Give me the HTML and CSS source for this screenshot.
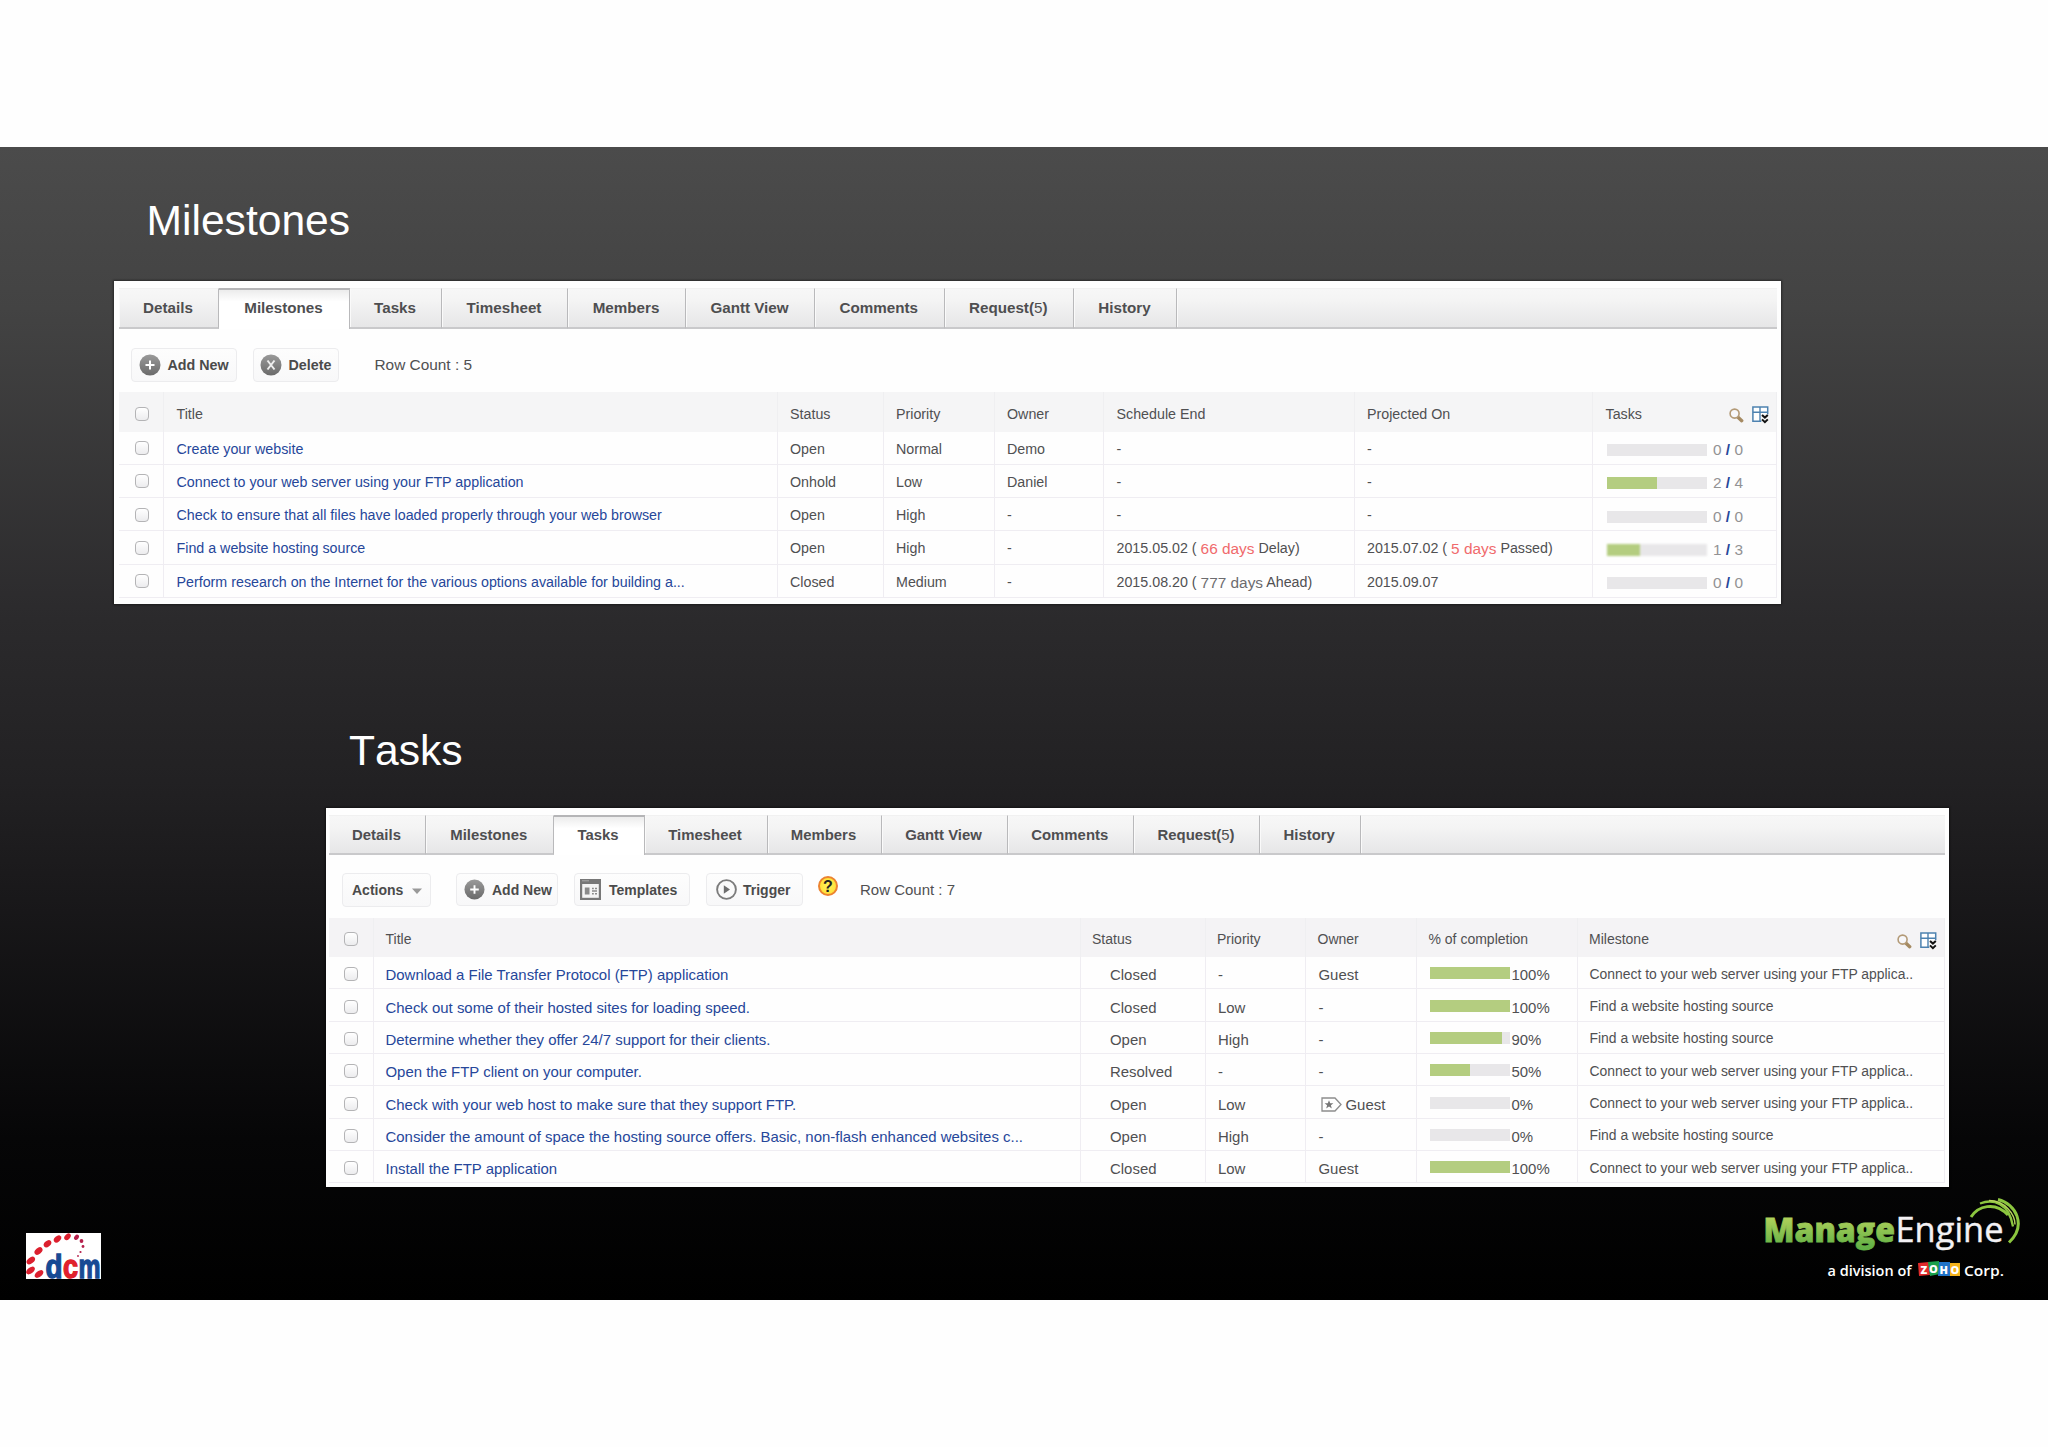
FILE: index.html
```html
<!DOCTYPE html>
<html lang="en">
<head>
<meta charset="utf-8">
<title>Milestones and Tasks</title>
<link rel="stylesheet" href="styles.css">
</head>
<body>
<svg class="defs" width="0" height="0" aria-hidden="true">
  <defs>
    <linearGradient id="disc" x1="0" y1="0" x2="0" y2="1"><stop offset="0" stop-color="#9a9a9a"/><stop offset="1" stop-color="#6a6a6a"/></linearGradient>
    <symbol id="i-add" viewBox="0 0 22 22"><circle cx="11" cy="11" r="10.5" fill="url(#disc)"/><path d="M11 6.5v9M6.5 11h9" stroke="#fff" stroke-width="2"/></symbol>
    <symbol id="i-del" viewBox="0 0 22 22"><circle cx="11" cy="11" r="10.5" fill="url(#disc)"/><path d="M7.5 6.5l7 9M14.5 6.5l-7 9" stroke="#eee" stroke-width="2"/></symbol>
    <symbol id="i-tpl" viewBox="0 0 21 21"><path d="M0 0h21v21H0z" fill="#777"/><path d="M2.2 5h16.6v13.8H2.2z" fill="#f4f4f4"/><path d="M2 1.8h7" stroke="#aaa"/><path d="M4.800 8.500h4.700v7H4.800z" fill="#8a8a8a"/><path d="M12 9.500h1.800M15 9.500h2M12 12h5M12 14.800h1.800M15 14.800h2" stroke="#8a8a8a" stroke-width="1.500"/></symbol>
    <symbol id="i-run" viewBox="0 0 21 21"><circle cx="10.500" cy="10.500" r="9.400" fill="#fafafa" stroke="#7c7c7c" stroke-width="1.900"/><path d="M7.800 6.200l6.200 4.300-6.200 4.300z" fill="#6e6e6e"/></symbol>
    <symbol id="i-find" viewBox="0 0 15 15"><path d="M9 9.200l3.700 3.500" stroke="#a58a62" stroke-width="3.400" stroke-linecap="round"/><circle cx="5.600" cy="5.600" r="4.500" fill="#f7f7fa" stroke="#b39a77" stroke-width="1.600"/></symbol>
    <symbol id="i-cols" viewBox="0 0 17 18"><path d="M.9 .9h14.800v14.400H.9z" fill="#fff" stroke="#4d82b0" stroke-width="1.500"/><path d="M.9 6.300h14.800M8 .9v14.400" stroke="#4d82b0" stroke-width="1.400" fill="none"/><path d="M9.300 8.300h7.700v9.700H9.300z" fill="#f5f5f5"/><path d="M10 9l2.900 2.600L15.800 9M10 13.400l2.900 2.800 2.900-2.800" fill="none" stroke="#111" stroke-width="2"/></symbol>
  </defs>
</svg>

<main class="slide">
  <h1 class="heading heading-milestones">Milestones</h1>

  <section class="panel milestones">
    <nav class="tabs">
      <a>Details</a><a class="active">Milestones</a><a>Tasks</a><a>Timesheet</a><a>Members</a><a>Gantt View</a><a>Comments</a><a>Request(<i>5</i>)</a><a>History</a><span></span>
    </nav>
    <div class="toolbar">
      <button class="btn"><svg class="disc"><use href="#i-add"/></svg>Add New</button>
      <button class="btn"><svg class="disc"><use href="#i-del"/></svg>Delete</button>
      <span class="count">Row Count : 5</span>
    </div>
    <div class="grid">
      <div class="row head"><span class="pick"><b class="box"></b></span><span>Title</span><span>Status</span><span>Priority</span><span>Owner</span><span>Schedule End</span><span>Projected On</span><span class="last">Tasks<span class="tools"><svg class="find"><use href="#i-find"/></svg><svg class="cols"><use href="#i-cols"/></svg></span></span></div>
      <div class="row"><span class="pick"><b class="box"></b></span><a>Create your website</a><span>Open</span><span>Normal</span><span>Demo</span><span>-</span><span>-</span><span class="progress"><span class="bar"></span><em>0 <b>/</b> 0</em></span></div>
      <div class="row"><span class="pick"><b class="box"></b></span><a>Connect to your web server using your FTP application</a><span>Onhold</span><span>Low</span><span>Daniel</span><span>-</span><span>-</span><span class="progress"><span class="bar"><i style="width:50%"></i></span><em>2 <b>/</b> 4</em></span></div>
      <div class="row"><span class="pick"><b class="box"></b></span><a>Check to ensure that all files have loaded properly through your web browser</a><span>Open</span><span>High</span><span>-</span><span>-</span><span>-</span><span class="progress"><span class="bar"></span><em>0 <b>/</b> 0</em></span></div>
      <div class="row"><span class="pick"><b class="box"></b></span><a>Find a website hosting source</a><span>Open</span><span>High</span><span>-</span><span>2015.05.02 ( <em class="late">66 days</em> Delay)</span><span>2015.07.02 ( <em class="late">5 days</em> Passed)</span><span class="progress"><span class="bar soft"><i style="width:33.3%"></i></span><em>1 <b>/</b> 3</em></span></div>
      <div class="row"><span class="pick"><b class="box"></b></span><a>Perform research on the Internet for the various options available for building a...</a><span>Closed</span><span>Medium</span><span>-</span><span>2015.08.20 ( <em class="early">777 days</em> Ahead)</span><span>2015.09.07</span><span class="progress"><span class="bar"></span><em>0 <b>/</b> 0</em></span></div>
    </div>
  </section>

  <h1 class="heading heading-tasks">Tasks</h1>

  <section class="panel tasks">
    <nav class="tabs">
      <a>Details</a><a>Milestones</a><a class="active">Tasks</a><a>Timesheet</a><a>Members</a><a>Gantt View</a><a>Comments</a><a>Request(<i>5</i>)</a><a>History</a><span></span>
    </nav>
    <div class="toolbar">
      <button class="btn actions">Actions<svg class="caret" viewBox="0 0 10 6"><path d="M0 .5h10L5 6z" fill="#999"/></svg></button>
      <button class="btn add"><svg class="disc"><use href="#i-add"/></svg>Add New</button>
      <button class="btn tpl"><svg class="disc"><use href="#i-tpl"/></svg>Templates</button>
      <button class="btn run"><svg class="disc"><use href="#i-run"/></svg>Trigger</button>
      <span class="help">?</span>
      <span class="count">Row Count : 7</span>
    </div>
    <div class="grid">
      <div class="row head"><span class="pick"><b class="box"></b></span><span>Title</span><span>Status</span><span>Priority</span><span>Owner</span><span>% of completion</span><span class="last">Milestone<span class="tools"><svg class="find"><use href="#i-find"/></svg><svg class="cols"><use href="#i-cols"/></svg></span></span></div>
      <div class="row"><span class="pick"><b class="box"></b></span><a>Download a File Transfer Protocol (FTP) application</a><span class="status">Closed</span><span>-</span><span>Guest</span><span class="progress"><span class="bar"><i style="width:100%"></i></span><em>100%</em></span><span class="ms">Connect to your web server using your FTP applica..</span></div>
      <div class="row"><span class="pick"><b class="box"></b></span><a>Check out some of their hosted sites for loading speed.</a><span class="status">Closed</span><span>Low</span><span>-</span><span class="progress"><span class="bar"><i style="width:100%"></i></span><em>100%</em></span><span class="ms">Find a website hosting source</span></div>
      <div class="row"><span class="pick"><b class="box"></b></span><a>Determine whether they offer 24/7 support for their clients.</a><span class="status">Open</span><span>High</span><span>-</span><span class="progress"><span class="bar"><i style="width:90%"></i></span><em>90%</em></span><span class="ms">Find a website hosting source</span></div>
      <div class="row"><span class="pick"><b class="box"></b></span><a>Open the FTP client on your computer.</a><span class="status">Resolved</span><span>-</span><span>-</span><span class="progress"><span class="bar"><i style="width:50%"></i></span><em>50%</em></span><span class="ms">Connect to your web server using your FTP applica..</span></div>
      <div class="row"><span class="pick"><b class="box"></b></span><a>Check with your web host to make sure that they support FTP.</a><span class="status">Open</span><span>Low</span><span class="owner"><svg class="tag" viewBox="0 0 21 15"><path d="M1 1h13l6 6.500-6 6.500H1z" fill="#fff" stroke="#8d8d8d" stroke-width="1.300"/><path d="M8 3.200l1.200 3 3.200.1-2.500 2 .9 3.100L8 9.600l-2.800 1.800.9-3.100-2.500-2 3.200-.1z" fill="#777"/></svg>Guest</span><span class="progress"><span class="bar"></span><em>0%</em></span><span class="ms">Connect to your web server using your FTP applica..</span></div>
      <div class="row"><span class="pick"><b class="box"></b></span><a>Consider the amount of space the hosting source offers. Basic, non-flash enhanced websites c...</a><span class="status">Open</span><span>High</span><span>-</span><span class="progress"><span class="bar"></span><em>0%</em></span><span class="ms">Find a website hosting source</span></div>
      <div class="row"><span class="pick"><b class="box"></b></span><a>Install the FTP application</a><span class="status">Closed</span><span>Low</span><span>Guest</span><span class="progress"><span class="bar"><i style="width:100%"></i></span><em>100%</em></span><span class="ms">Connect to your web server using your FTP applica..</span></div>
    </div>
  </section>

  <footer class="brands">
    <svg class="dcm" viewBox="0 0 75 46" width="75" height="46">
      <path d="M0 0h75v46H0z" fill="#fff"/>
      <g fill="#dc1f2e">
        <ellipse cx="13" cy="41" rx="5" ry="3" transform="rotate(-38 13 41)"/>
        <ellipse cx="4.500" cy="37.500" rx="5" ry="3" transform="rotate(-38 4.500 37.500)"/>
        <ellipse cx="4.800" cy="27.500" rx="4.800" ry="3" transform="rotate(-38 4.800 27.500)"/>
        <ellipse cx="12.500" cy="18" rx="4.600" ry="3" transform="rotate(-42 12.500 18)"/>
        <ellipse cx="21.500" cy="10.800" rx="4.300" ry="2.900" transform="rotate(-40 21.500 10.800)"/>
        <ellipse cx="31.500" cy="6" rx="4.200" ry="2.800" transform="rotate(-40 31.500 6)"/>
        <ellipse cx="41.500" cy="3.800" rx="3.800" ry="2.600" transform="rotate(-45 41.500 3.800)"/>
      </g>
      <g fill="#b5204c"><ellipse cx="50.500" cy="4.300" rx="2.900" ry="2.100" transform="rotate(-50 50.500 4.300)"/><circle cx="55.500" cy="8" r="1.900"/><circle cx="57" cy="13.500" r="1.400"/><circle cx="54.500" cy="19" r="1.100"/><circle cx="52" cy="23" r=".9"/></g>
      <g class="dcm-word"><text x="19.500" y="44.500" textLength="17" lengthAdjust="spacingAndGlyphs" fill="#174a94" stroke="#174a94">d</text><text x="37" y="44.500" textLength="15" lengthAdjust="spacingAndGlyphs" fill="#e0202c" stroke="#e0202c">c</text><text x="52.500" y="44.500" textLength="22" lengthAdjust="spacingAndGlyphs" fill="#174a94" stroke="#174a94">m</text></g>
    </svg>
    <svg class="me" viewBox="0 0 262 90" width="262" height="90">
      <defs><linearGradient id="leaf" x1="0" y1="0" x2="0" y2="1"><stop offset="0.200" stop-color="#b5d35c"/><stop offset=".9" stop-color="#62b146"/></linearGradient></defs>
      <text class="me-bold" x="3.500" y="46" textLength="131.500" lengthAdjust="spacingAndGlyphs" fill="url(#leaf)" stroke="url(#leaf)">Manage</text>
      <text class="me-light" x="135.500" y="46" textLength="108" lengthAdjust="spacingAndGlyphs" fill="#f3f1f4" stroke="#f3f1f4">Engine</text>
      <g fill="none" stroke="#8cc63f">
        <path d="M211 21c7-11 24-16 37-2" stroke-width="3"/>
        <path d="M220 7.500c13-5 29-1 33 23" stroke-width="2.300"/>
        <path d="M229 4.500c16 0 26 14 26 24" stroke-width="1.500" stroke="#b5d35c"/>
        <path d="M238 3.500c18 4 29 26 11 43" stroke-width="3"/>
      </g>
      <g class="me-sub" fill="#fff"><text x="67.500" y="80" textLength="84" lengthAdjust="spacingAndGlyphs">a division of</text><text x="204" y="80" textLength="40" lengthAdjust="spacingAndGlyphs">Corp.</text></g>
      <path d="M158 67l11-1 1 13-11 1z" fill="#e02b2b"/><path d="M168 66l11-1 1 13-10 2z" fill="#19a04b"/><path d="M179 66h11v14h-12z" fill="#1f72c8"/><path d="M190 67h10v13h-10z" fill="#f5b21b"/>
      <g class="zoho" fill="#fff"><text x="160.500" y="77.500">Z</text><text x="169" y="76.500">O</text><text x="179.500" y="77.500">H</text><text x="190.500" y="78">O</text></g>
    </svg>
  </footer>
</main>
</body>
</html>
```
FILE: styles.css
```css
* { box-sizing: border-box; }
body { margin: 0; padding: 147px 0; background: #fefefe; font-family: "Liberation Sans", Arial, sans-serif; color: #505052; }
.defs { position: absolute; }
a { color: inherit; text-decoration: none; }
em, i { font-style: normal; }

.slide { height: 1153px; display: flex; flex-direction: column; background: linear-gradient(#4b4b4b 0, #434343 14%, #2b2a2c 41%, #222123 55%, #1b1a1c 63%, #060607 86%, #000 100%); }
.heading { margin: 0; font-weight: 400; font-size: 42.600px; line-height: 50px; color: #fff; font-kerning: none; }
.heading-milestones { margin: 48px 0 36px 146.500px; }
.heading-tasks { margin: 121px 0 33px 349px; }

.panel { background: #fefefe; box-shadow: 0 0 2px 1px rgba(0, 0, 0, .4); flex: none; }
.milestones { width: 1667px; height: 323px; margin-left: 114px; padding: 7px 4px 0 5px; }
.tasks { width: 1623px; height: 379px; margin-left: 326px; padding: 7px 4px 0 3px; }

.tabs { display: grid; height: 40px; font-weight: 700; color: #4e4e50; }
.milestones .tabs { height: 41px; grid-template-columns: 100px 131px 92px 126px 118px 129px 129.500px 129.500px 103px 1fr; font-size: 15.200px; }
.tasks .tabs { grid-template-columns: 97px 127.500px 91px 123px 114px 126px 126.500px 126px 100.500px 1fr; font-size: 14.900px; }
.tabs > * { display: flex; align-items: center; justify-content: center; padding-right: 1px; background: linear-gradient(#f7f7f7, #f4f4f4 30%, #e6e6e7); border-right: 1px solid #b9b9bb; border-bottom: 2px solid #c9c9cb; border-top: 1px solid #f1f1f1; box-shadow: inset 1px 0 #fafafa; }
.milestones .tabs > * { padding-bottom: 1px; }
.tabs > span { border-right: 0; }
.tabs > .active { background: linear-gradient(#ececec, #fff 30%); border-top: 2px solid #b5b5b7; border-bottom: 0; box-shadow: none; padding-bottom: 3px; }
.milestones .tabs > .active { padding-bottom: 4px; }
.tabs i { font-weight: 400; }

.toolbar { display: flex; }
.btn { display: flex; align-items: center; height: 34px; padding: 0; border: 1px solid #ececee; border-radius: 4px; background: linear-gradient(#fdfdfd, #f8f8f9); font: 700 14.300px "Liberation Sans", Arial, sans-serif; color: #4b4b4b; }
.disc { width: 22px; height: 22px; margin: 0 7px; flex: none; }
.milestones .toolbar { padding: 19px 0 0 11.500px; height: 62.500px; }
.milestones .btn { width: 106px; margin-right: 16px; }
.milestones .btn + .btn { width: 86px; margin-right: 36px; }
.milestones .btn + .btn .disc { margin-left: 6.500px; margin-right: 6.500px; }
.tasks .btn { font-size: 14px; height: 33px; }
.tasks .disc { width: 21px; height: 21px; }
.tasks .toolbar { padding: 18px 0 0 13px; height: 63px; }
.tasks .actions { width: 89px; padding-left: 9px; margin-right: 25px; height: 34px; }
.caret { width: 10px; height: 6px; margin: 2px 0 0 9px; }
.tasks .add { width: 102px; margin-right: 16px; }
.tasks .tpl { width: 116px; margin-right: 16px; }
.tasks .tpl .disc { margin-left: 5px; margin-right: 8px; }
.tasks .run { width: 97px; margin-right: 15px; }
.tasks .run .disc { margin: 0 6px 0 9px; }
.count { font-size: 15.400px; line-height: 34px; }
.tasks .count { font-size: 15px; line-height: 33px; }
.help { width: 20px; height: 20px; margin: 3px 22px 0 0; border: 2px solid #ec8330; border-radius: 50%; background: radial-gradient(#fff45a, #ffd92e); color: #222; font-weight: 700; font-size: 16px; line-height: 17px; text-align: center; }

.row { display: grid; border-bottom: 1px solid #efedf2; white-space: nowrap; }
.row > * { display: flex; align-items: center; padding-left: 12.500px; border-right: 1px solid #efedf2; white-space: pre; min-width: 0; }
.row > .pick { padding-left: 15.500px; }
.head { background: #f5f5f6; border-bottom: 0; }
.head > * { border-right-color: #efeff1; }
.row > a { color: #26479a; }
.box { width: 14px; height: 14px; border: 1px solid #b4b4b6; border-radius: 4px; background: linear-gradient(#fff, #ececee); }
.last { justify-content: space-between; }
.tools { display: flex; gap: 8px; padding-top: 3px; }
.find { width: 15px; height: 15px; margin-top: 2px; }
.cols { width: 17px; height: 18px; }
.bar { display: block; height: 12px; background: #e8e7e9; }
.bar i { display: block; height: 100%; background: #b4cd80; }

.milestones .row { grid-template-columns: 45px 613.500px 106px 111px 109.500px 250.500px 238.500px 1fr; height: 33.250px; font-size: 14.280px; }
.milestones .row > * { padding-top: 2px; }
.milestones .row > .pick { padding-top: 1px; }
.milestones .head { height: 40px; }
.milestones .row.head > * { padding-top: 4px; }
.milestones .head .tools { padding-right: 7px; }
.milestones .row > .progress { padding: 5px 0 0 14px; }
.milestones .bar { width: 100px; margin-right: 6px; }
.milestones .progress em { font-size: 15.400px; color: #929294; }
.milestones .progress b { color: #26479a; }
.soft { filter: blur(.8px); }
.late, .early { font-size: 15.400px; position: relative; top: 1px; }
.late { color: #f06a6c; }
.early { color: #6c6c6f; }

.tasks .row { grid-template-columns: 45px 706.500px 125px 100.500px 111px 160.500px 1fr; height: 32.350px; font-size: 14.950px; }
.tasks .row > * { padding-top: 4px; padding-left: 12.500px; }
.tasks .row > a { padding-left: 11.500px; }
.tasks .row > .pick { padding-left: 14.500px; padding-top: 3px; }
.tasks .head { height: 39px; font-size: 14px; background: #f4f3f5; }
.tasks .row.head > * { padding-top: 3px; padding-left: 11.500px; }
.tasks .row.head > .pick { padding-top: 3px; padding-left: 14.500px; }
.tasks .head .tools { padding-right: 7px; }
.tasks .row > .status { padding-left: 29.500px; }
.tasks .bar { width: 80.500px; margin: -3px 1.500px 0 0; }
.tasks .row > .ms { font-size: 13.920px; padding: 2px 0 0 12px; }
.tag { width: 21px; height: 15px; margin: 0 4px 0 2px; }

.brands { display: flex; justify-content: space-between; align-items: flex-start; padding: 9px 26px 0 26px; }
.dcm { margin-top: 37px; overflow: visible; }
.dcm-word { font: 700 34px "Liberation Sans", Arial, sans-serif; stroke-width: 1.400; }
.me-bold { font: 800 34px "Open Sans", sans-serif; stroke-width: .8; }
.me-light { font: 400 34px "Open Sans", sans-serif; stroke-width: .4; }
.me-sub { font: 600 15px "Open Sans", sans-serif; }
.zoho { font: 800 11px "Open Sans", sans-serif; }
```
